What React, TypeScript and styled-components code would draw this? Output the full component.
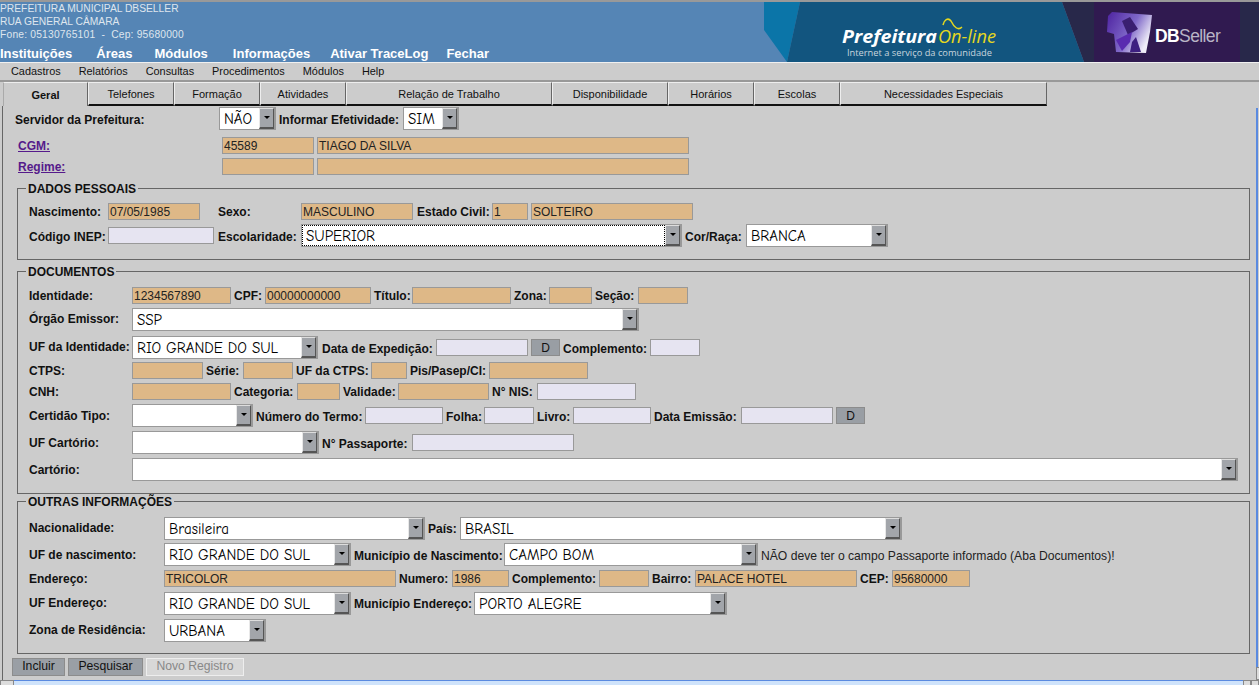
import React from "react";
import styled, { createGlobalStyle } from "styled-components";

const Global = createGlobalStyle`
  html, body { margin: 0; padding: 0; background: #cccccc; overflow: hidden; }
  body { font-family: "Liberation Sans", Arial, sans-serif; font-size: 12px; color: #111; }
  #root { width: 1259px; height: 685px; overflow: hidden; }
`;

const Page = styled.div`
  width: 1259px; height: 685px; display: flex; flex-direction: column; background: #ccc; border-top: 2px solid #999; box-sizing: border-box;
`;
const Header = styled.header`
  display: flex; height: 60px; background: #5585b5; flex: none;
`;
const HeaderLeft = styled.div`
  flex: 1; display: flex; flex-direction: column; color: #dfe6ee; font-size: 10.27px; line-height: 13px; min-width: 0;
`;
const Line = styled.div<{ $sp?: boolean }>`
  white-space: pre; letter-spacing: ${(p) => (p.$sp ? "0.2px" : "0")};
`;
const Nav = styled.nav`
  margin-top: auto; display: flex; height: 16px; line-height: 16px; font-size: 13px; font-weight: bold; color: #fff; white-space: nowrap;
`;
const NavItem = styled.span<{ $ml?: number }>`
  margin-left: ${(p) => p.$ml ?? 0}px;
`;
const Banner = styled.svg`
  display: block; width: 495px; height: 60px; flex: none;
`;
const Menu = styled.div`
  height: 18px; flex: none; box-sizing: border-box; border-top: 1px solid #f0f0f0; display: flex; gap: 18px; padding-left: 11px; font-size: 10.9px; line-height: 17px; color: #111; background: #ccc;
`;
const TabBar = styled.div`
  height: 26px; flex: none; box-sizing: border-box; border-top: 2px solid #999; display: flex; padding-left: 3px;
`;
const Tab = styled.div<{ $w: number; $active?: boolean }>`
  width: ${(p) => p.$w}px; box-sizing: border-box; text-align: center; font-size: 11px; white-space: nowrap;
  font-weight: ${(p) => (p.$active ? "bold" : "normal")};
  line-height: ${(p) => (p.$active ? "25px" : "22px")};
  border-left: 1px solid ${(p) => (p.$active ? "#aaa" : "#eee")};
  border-top: 1px solid #eee;
  border-right: 1px solid #666;
  border-bottom: ${(p) => (p.$active ? "none" : "2px solid #111")};
`;
const Body = styled.div`
  flex: 1; display: flex; min-height: 0; padding-left: 2px;
`;
const Main = styled.main`
  width: 1253px; border-left: 1px solid #666; box-sizing: content-box; padding-top: 1px; flex: none;
`;
const Edge = styled.div`
  flex: none; display: flex; flex-direction: column; width: 3px; margin-top: 2px; padding-bottom: 5px;
`;
const EdgeLine = styled.div`
  flex: 1; border-left: 2px solid #5a8ae0;
`;
const EdgeBox = styled.div`
  height: 11px; border: 1px solid #888; border-right: none; background: #ddd; flex: none;
`;
const Row = styled.div<{ $h: number; $mt?: number; $pl?: number }>`
  display: flex; align-items: center; gap: 3px; height: ${(p) => p.$h}px; margin-top: ${(p) => p.$mt ?? 0}px; padding-left: ${(p) => p.$pl ?? 0}px;
`;
/* $dy nudges a label inside its centred row: the old form's cells do not centre text exactly */
const Label = styled.span<{ $w: number; $ml?: number; $dy?: number }>`
  width: ${(p) => p.$w}px; margin-left: ${(p) => p.$ml ?? 0}px; flex: none; font-weight: bold; font-size: 12px; white-space: nowrap; color: #111;
  margin-top: ${(p) => ((p.$dy ?? 0) > 0 ? (p.$dy ?? 0) * 2 : 0)}px;
  margin-bottom: ${(p) => ((p.$dy ?? 0) < 0 ? -(p.$dy ?? 0) * 2 : 0)}px;
`;
const LinkLabel = styled.a<{ $w: number }>`
  width: ${(p) => p.$w}px; flex: none; font-weight: bold; font-size: 12px; color: #551a8b; text-decoration: underline;
`;
const Field = styled.div<{ $w: number; $kind?: "locked" | "open" }>`
  width: ${(p) => p.$w}px; height: 17px; box-sizing: border-box; flex: none; border: 1px solid #999; padding-left: 1px;
  background: ${(p) => (p.$kind === "open" ? "#e6e4f1" : "#deb887")};
  font-size: 12px; line-height: 16px; white-space: nowrap; overflow: hidden; color: #222;
`;
const SelectBox = styled.div<{ $w: number }>`
  width: ${(p) => p.$w}px; height: 23px; box-sizing: border-box; flex: none; display: flex; background: #fff; border: 1px solid #999; border-right-width: 2px;
`;
const SelectText = styled.div<{ $focus?: boolean }>`
  flex: 1; min-width: 0; padding-left: 4px; font-family: "Comic Sans MS", "Comic Neue", cursive; font-size: 15px; line-height: 22px; white-space: nowrap; overflow: hidden; color: #000;
  outline: ${(p) => (p.$focus ? "1px dotted #000" : "none")}; outline-offset: -1px;
`;
const Arrow = styled.div`
  width: 15px; flex: none; box-sizing: border-box; background: #a2a5aa; border-left: 1px solid #e8e8e8; border-top: 1px solid #ddd; border-right: 1px solid #555; border-bottom: 2px solid #555; position: relative;
  &::after { content: ""; position: absolute; left: 4px; top: 7px; border: 3px solid transparent; border-top: 3px solid #000; border-bottom: none; }
`;
const DateBtn = styled.div`
  width: 29px; height: 17px; box-sizing: border-box; flex: none; background: #999ea4; border: 1px solid #8c8c8c; font-size: 12px; line-height: 16px; text-align: center; color: #111; margin-top: -1px;
`;
const Note = styled.span`
  font-size: 12.15px; white-space: nowrap; color: #222; margin-top: 2px;
`;
const Fieldset = styled.fieldset<{ $mt: number; $pb: number }>`
  margin: ${(p) => p.$mt}px 0 0 14px; padding: 0 0 ${(p) => p.$pb}px 11px; width: 1233px; box-sizing: border-box; border: 1px solid #666; min-width: 0;
`;
const Legend = styled.legend`
  margin-left: -3px; padding: 0 2px; font-weight: bold; font-size: 12px; line-height: 14px; color: #111; transform: translateY(1px);
`;
const Actions = styled.div`
  display: flex; gap: 3px; margin: 4px 0 0 9px; height: 18px;
`;
const Btn = styled.div<{ $w: number; $off?: boolean }>`
  width: ${(p) => p.$w}px; box-sizing: border-box; text-align: center; font-size: 12.2px; line-height: 15px;
  background: ${(p) => (p.$off ? "#d8d8d8" : "#9a9fa5")};
  border: 1px solid ${(p) => (p.$off ? "#eee" : "#8c8c8c")};
  color: ${(p) => (p.$off ? "#888" : "#111")};
`;
const BottomBar = styled.div`
  position: absolute; left: 0; right: 0; top: 680px; height: 5px; display: flex;
`;
const BottomStub = styled.div<{ $w: number }>`
  width: ${(p) => p.$w}px; flex: none; border: 1px solid #888; border-bottom: none; box-sizing: border-box; background: #ddd;
`;
const BottomTrack = styled.div`
  flex: 1; background: #cfe3fb; border-top: 1px solid #5a8ae0;
`;

const Sel = ({ w, t, focus }: { w: number; t?: string; focus?: boolean }) => (
  <SelectBox $w={w}>
    <SelectText $focus={focus}>{t}</SelectText>
    <Arrow />
  </SelectBox>
);
const F = ({ w, t }: { w: number; t?: string }) => <Field $w={w}>{t}</Field>;
const O = ({ w }: { w: number }) => <Field $w={w} $kind="open" />;

const tabs: [string, number][] = [
  ["Telefones", 86],
  ["Formação", 86],
  ["Atividades", 86],
  ["Relação de Trabalho", 206],
  ["Disponibilidade", 116],
  ["Horários", 86],
  ["Escolas", 86],
  ["Necessidades Especiais", 207],
];

const BannerArt = () => (
  <Banner viewBox="0 0 495 60">
    <defs>
      <linearGradient id="cube" x1="0" y1="0" x2="1" y2="0.5">
        <stop offset="0" stopColor="#4d22a0" />
        <stop offset="0.6" stopColor="#7f68c8" />
        <stop offset="1" stopColor="#efedf8" />
      </linearGradient>
    </defs>
    <polygon points="0,0 36,0 23,60 0,60" fill="#0b75a8" />
    <polygon points="0,28 23,60 0,60" fill="#5585b5" />
    <polygon points="36,0 298,0 320,60 23,60" fill="#12557f" />
    <polygon points="298,0 495,0 495,60 320,60" fill="#28284a" />
    <rect x="330" y="0" width="146" height="60" fill="#301a50" />
    <polygon points="348,10 388,13 386,30 382,51 352,50 350,32 343,30 344,14" fill="url(#cube)" />
    <polygon points="358,19 366,15 374,27 364,33" fill="#3a1f70" />
    <polygon points="352,38 368,30 366,40 358,49" fill="#5a2bb0" />
    <polygon points="368,40 372,35 377,50 366,50" fill="#3d2080" />
    <text x="391" y="40" fontFamily="'Liberation Sans', sans-serif" fontSize="17.5" letterSpacing="-0.6">
      <tspan fill="#fff" fontWeight="bold">DB</tspan>
      <tspan fill="#b9b4c6">Seller</tspan>
    </text>
    <text x="78" y="41" fill="#fff" fontFamily="'Open Sans', sans-serif" fontWeight="bold" fontStyle="italic" fontSize="18.5" textLength="95" lengthAdjust="spacingAndGlyphs">Prefeitura</text>
    <text x="174" y="41" fill="#e6d81e" fontFamily="'Open Sans', sans-serif" fontStyle="italic" fontSize="18" textLength="58" lengthAdjust="spacingAndGlyphs">On-line</text>
    <path d="M179 23 C180 18 184 15 187 19 C190 25 194 29 198 25" fill="none" stroke="#e6d81e" strokeWidth="1.5" />
    <text x="83" y="54" fill="#c9d6de" fontFamily="'Open Sans', sans-serif" fontSize="9.5" textLength="145" lengthAdjust="spacingAndGlyphs">Internet a serviço da comunidade</text>
  </Banner>
);

export default function App() {
  return (
    <Page>
      <Global />
      <Header>
        <HeaderLeft>
          <Line>PREFEITURA MUNICIPAL DBSELLER</Line>
          <Line>RUA GENERAL CÂMARA</Line>
          <Line $sp>{"Fone: 05130765101  -  Cep: 95680000"}</Line>
          <Nav>
            <NavItem>Instituições</NavItem>
            <NavItem $ml={24}>Áreas</NavItem>
            <NavItem $ml={22}>Módulos</NavItem>
            <NavItem $ml={25}>Informações</NavItem>
            <NavItem $ml={20}>Ativar TraceLog</NavItem>
            <NavItem $ml={18}>Fechar</NavItem>
          </Nav>
        </HeaderLeft>
        <BannerArt />
      </Header>
      <Menu>
        <span>Cadastros</span>
        <span>Relatórios</span>
        <span>Consultas</span>
        <span>Procedimentos</span>
        <span>Módulos</span>
        <span>Help</span>
      </Menu>
      <TabBar>
        <Tab $w={85} $active>Geral</Tab>
        {tabs.map(([t, w]) => (
          <Tab key={t} $w={w}>{t}</Tab>
        ))}
      </TabBar>
      <Body>
        <Main>
          <Row $h={23} $pl={12}>
            <Label $w={201} $dy={1}>Servidor da Prefeitura:</Label>
            <Sel w={57} t="NÃO" />
            <Label $w={121} $dy={1}>Informar Efetividade:</Label>
            <Sel w={56} t="SIM" />
          </Row>
          <Row $h={17} $mt={7} $pl={15}>
            <LinkLabel $w={201}>CGM:</LinkLabel>
            <F w={92} t="45589" />
            <F w={372} t="TIAGO DA SILVA" />
          </Row>
          <Row $h={17} $mt={4} $pl={15}>
            <LinkLabel $w={201}>Regime:</LinkLabel>
            <F w={92} />
            <F w={372} />
          </Row>

          <Fieldset $mt={6} $pb={12}>
            <Legend>DADOS PESSOAIS</Legend>
            <Row $h={17} $mt={8}>
              <Label $w={76}>Nascimento:</Label>
              <F w={92} t="07/05/1985" />
              <Label $w={80} $ml={15}>Sexo:</Label>
              <F w={112} t="MASCULINO" />
              <Label $w={72} $ml={1}>Estado Civil:</Label>
              <F w={36} t="1" />
              <F w={162} t="SOLTEIRO" />
            </Row>
            <Row $h={23} $mt={4}>
              <Label $w={76} $dy={1}>Código INEP:</Label>
              <O w={106} />
              <Label $w={80} $ml={1} $dy={1}>Escolaridade:</Label>
              <Sel w={381} t="SUPERIOR" focus />
              <Label $w={58} $dy={1}>Cor/Raça:</Label>
              <Sel w={142} t="BRANCA" />
            </Row>
          </Fieldset>

          <Fieldset $mt={4} $pb={12}>
            <Legend>DOCUMENTOS</Legend>
            <Row $h={17} $mt={9}>
              <Label $w={100}>Identidade:</Label>
              <F w={99} t="1234567890" />
              <Label $w={28}>CPF:</Label>
              <F w={106} t="00000000000" />
              <Label $w={35}>Título:</Label>
              <F w={99} />
              <Label $w={32}>Zona:</Label>
              <F w={43} />
              <Label $w={40}>Seção:</Label>
              <F w={50} />
            </Row>
            <Row $h={23} $mt={4}>
              <Label $w={100} $dy={-1}>Órgão Emissor:</Label>
              <Sel w={507} t="SSP" />
            </Row>
            <Row $h={23} $mt={5}>
              <Label $w={100} $dy={-1}>UF da Identidade:</Label>
              <Sel w={186} t="RIO GRANDE DO SUL" />
              <Label $w={111} $ml={1} $dy={1}>Data de Expedição:</Label>
              <O w={92} />
              <DateBtn>D</DateBtn>
              <Label $w={84} $dy={1}>Complemento:</Label>
              <O w={50} />
            </Row>
            <Row $h={17} $mt={3}>
              <Label $w={100}>CTPS:</Label>
              <F w={71} />
              <Label $w={34}>Série:</Label>
              <F w={50} />
              <Label $w={72}>UF da CTPS:</Label>
              <F w={36} />
              <Label $w={76}>Pis/Pasep/CI:</Label>
              <F w={99} />
            </Row>
            <Row $h={17} $mt={4}>
              <Label $w={100}>CNH:</Label>
              <F w={99} />
              <Label $w={60}>Categoria:</Label>
              <F w={43} />
              <Label $w={52}>Validade:</Label>
              <F w={91} />
              <Label $w={42}>N° NIS:</Label>
              <O w={99} />
            </Row>
            <Row $h={23} $mt={4}>
              <Label $w={100}>Certidão Tipo:</Label>
              <Sel w={121} />
              <Label $w={106} $dy={1}>Número do Termo:</Label>
              <O w={78} />
              <Label $w={35} $dy={1}>Folha:</Label>
              <O w={50} />
              <Label $w={33} $dy={1}>Livro:</Label>
              <O w={78} />
              <Label $w={84} $dy={1}>Data Emissão:</Label>
              <O w={92} />
              <DateBtn>D</DateBtn>
            </Row>
            <Row $h={23} $mt={4}>
              <Label $w={100}>UF Cartório:</Label>
              <Sel w={187} />
              <Label $w={87} $dy={1}>N° Passaporte:</Label>
              <O w={162} />
            </Row>
            <Row $h={23} $mt={4}>
              <Label $w={100}>Cartório:</Label>
              <Sel w={1106} />
            </Row>
          </Fieldset>

          <Fieldset $mt={0} $pb={11}>
            <Legend>OUTRAS INFORMAÇÕES</Legend>
            <Row $h={23} $mt={9}>
              <Label $w={132} $dy={-1}>Nacionalidade:</Label>
              <Sel w={261} t="Brasileira" />
              <Label $w={29}>País:</Label>
              <Sel w={442} t="BRASIL" />
            </Row>
            <Row $h={23} $mt={3}>
              <Label $w={132}>UF de nascimento:</Label>
              <Sel w={187} t="RIO GRANDE DO SUL" />
              <Label $w={147} $dy={1}>Município de Nascimento:</Label>
              <Sel w={254} t="CAMPO BOM" />
              <Note>NÃO deve ter o campo Passaporte informado (Aba Documentos)!</Note>
            </Row>
            <Row $h={17} $mt={4}>
              <Label $w={132}>Endereço:</Label>
              <F w={232} t="TRICOLOR" />
              <Label $w={50}>Numero:</Label>
              <F w={57} t="1986" />
              <Label $w={84}>Complemento:</Label>
              <F w={50} />
              <Label $w={40}>Bairro:</Label>
              <F w={162} t="PALACE HOTEL" />
              <Label $w={29}>CEP:</Label>
              <F w={78} t="95680000" />
            </Row>
            <Row $h={23} $mt={5}>
              <Label $w={132} $dy={-1}>UF Endereço:</Label>
              <Sel w={187} t="RIO GRANDE DO SUL" />
              <Label $w={117}>Município Endereço:</Label>
              <Sel w={253} t="PORTO ALEGRE" />
            </Row>
            <Row $h={23} $mt={4}>
              <Label $w={132} $dy={-1}>Zona de Residência:</Label>
              <Sel w={102} t="URBANA" />
            </Row>
          </Fieldset>

          <Actions>
            <Btn $w={53}>Incluir</Btn>
            <Btn $w={75}>Pesquisar</Btn>
            <Btn $w={98} $off>Novo Registro</Btn>
          </Actions>
        </Main>
        <Edge>
          <EdgeLine />
          <EdgeBox />
        </Edge>
      </Body>
      <BottomBar>
        <BottomStub $w={14} />
        <BottomTrack />
        <BottomStub $w={8} />
        <BottomStub $w={8} />
      </BottomBar>
    </Page>
  );
}
